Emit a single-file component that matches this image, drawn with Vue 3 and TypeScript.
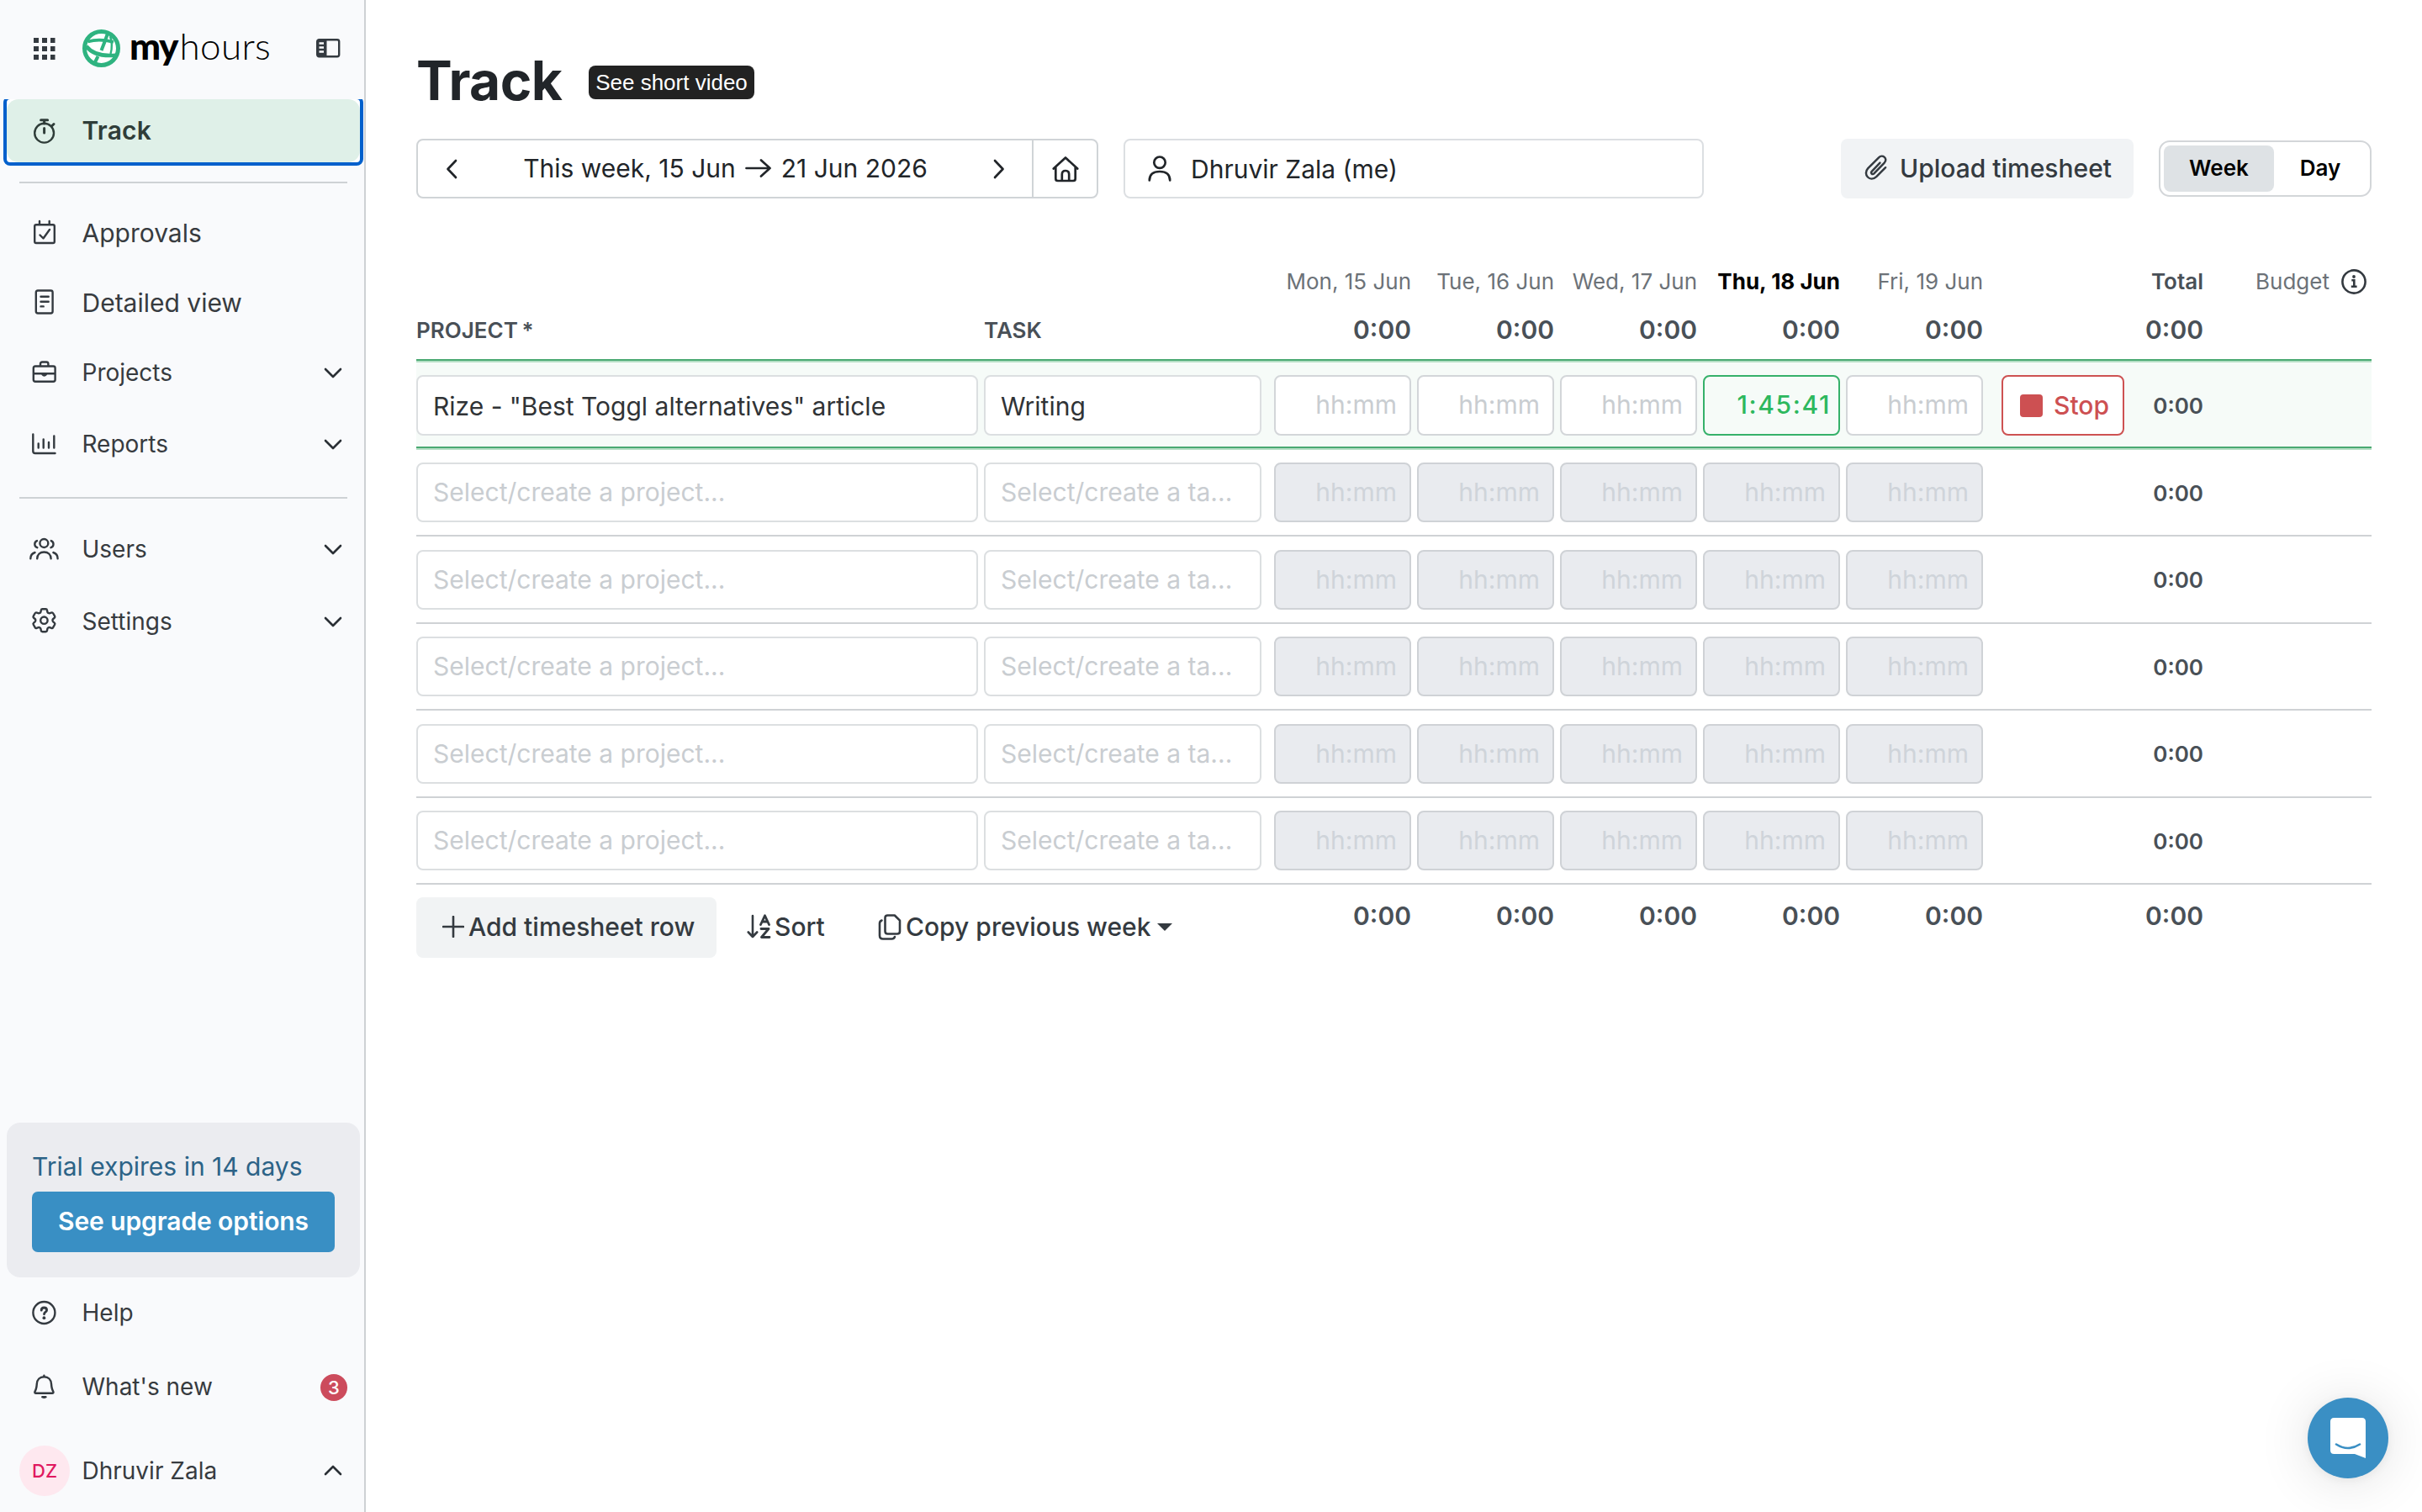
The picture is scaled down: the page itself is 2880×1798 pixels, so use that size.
<script setup lang="ts">
interface NavItem {
  label: string
  icon: string
  height: number
  expandable?: boolean
}

interface TimesheetRow {
  project: string
  task: string
  active: boolean
  entries: string[]
  total: string
}

const gear =
  'M9.594 3.94c.09-.542.56-.94 1.11-.94h2.593c.55 0 1.02.398 1.11.94l.213 1.281c.063.374.313.686.645.87.074.04.147.083.22.127.325.196.72.257 1.075.124l1.217-.456a1.125 1.125 0 0 1 1.37.49l1.296 2.247a1.125 1.125 0 0 1-.26 1.431l-1.003.827c-.293.241-.438.613-.43.992a7.723 7.723 0 0 1 0 .255c-.008.378.137.75.43.991l1.004.827c.424.35.534.955.26 1.43l-1.298 2.247a1.125 1.125 0 0 1-1.369.491l-1.217-.456c-.355-.133-.75-.072-1.076.124a6.47 6.47 0 0 1-.22.128c-.331.183-.581.495-.644.869l-.213 1.281c-.09.543-.56.94-1.11.94h-2.594c-.55 0-1.019-.398-1.11-.94l-.213-1.281c-.062-.374-.312-.686-.644-.87a6.52 6.52 0 0 1-.22-.127c-.325-.196-.72-.257-1.076-.124l-1.217.456a1.125 1.125 0 0 1-1.369-.49l-1.297-2.247a1.125 1.125 0 0 1 .26-1.431l1.004-.827c.292-.24.437-.613.43-.991a6.932 6.932 0 0 1 0-.255c.007-.38-.138-.751-.43-.992l-1.004-.827a1.125 1.125 0 0 1-.26-1.43l1.297-2.247a1.125 1.125 0 0 1 1.37-.491l1.216.456c.356.133.751.072 1.076-.124.072-.044.146-.086.22-.128.332-.183.582-.495.644-.869l.214-1.28Z'

// Outline icons drawn on a 36px grid
const icons: Record<string, string> = {
  approvals:
    'M9 8.2h20q1.800 0 1.800 1.800v18.200q0 1.800-1.800 1.800h-20q-1.800 0-1.800-1.800v-18.200q0-1.800 1.800-1.800zM13 4v4M24.700 4v4M13.500 20.500l4 4 7.500-10.500',
  detailed:
    'M11 3.500h15.400q2.200 0 2.200 2.200v22.600q0 2.200-2.200 2.200h-15.400q-2.200 0-2.200-2.200v-22.600q0-2.200 2.200-2.200zM14.500 10.700h9.200M14.500 16.700h9.200M14.500 22.400h3.200',
  projects:
    'M8 10.500h21.400q2.200 0 2.200 2.200v13.800q0 2.200-2.200 2.200h-21.400q-2.200 0-2.200-2.200v-13.800q0-2.200 2.200-2.200zM14 10.500v-2.800q0-2.200 2.200-2.200h5q2.200 0 2.200 2.200v2.800M5.800 19.200h25.800M16.500 20.200q2 2.600 4.400 0z',
  reports:
    'M5.300 6.500v20q0 2.500 2.500 2.500h23.700M11.700 17.500v5M17.700 12.500v10M24 16v6.500M30.300 8.500v14',
  users:
    'M13.400 11a4.950 4.950 0 1 0 9.900 0a4.950 4.950 0 1 0-9.900 0M10.200 29.300c0-4.800 3.400-7.800 8.200-7.800s8.200 3 8.200 7.800M10 8.100a4.300 4.300 0 0 0 .3 8.100M26.800 8.100a4.300 4.300 0 0 1-.3 8.100M2.300 29.300c0-3.700 1.700-6.200 5.200-7.300M34.600 29.300c0-3.700-1.700-6.200-5.200-7.300',
  help: 'M5.400 18a13 13 0 1 0 26 0a13 13 0 1 0-26 0',
  bell: 'M18.400 6.200c-5.200 0-8.300 3.700-8.600 8.400-.3 4.300-.7 6.400-2 8.500-.9 1.600-.6 2.600.6 2.600h20c1.200 0 1.500-1 .6-2.600-1.300-2.100-1.700-4.200-2-8.500-.3-4.700-3.400-8.400-8.600-8.400zM18.400 4.800v1.400M16.300 30.200q2.100 1 4.200 0z',
}

const primaryNav: NavItem[] = [
  { label: 'Approvals', icon: 'approvals', height: 82 },
  { label: 'Detailed view', icon: 'detailed', height: 84 },
  { label: 'Projects', icon: 'projects', height: 82, expandable: true },
  { label: 'Reports', icon: 'reports', height: 88, expandable: true },
]

const adminNav: NavItem[] = [
  { label: 'Users', icon: 'users', height: 86, expandable: true },
  { label: 'Settings', icon: 'settings', height: 86, expandable: true },
]

const days = [
  { label: 'Mon, 15 Jun', total: '0:00', today: false },
  { label: 'Tue, 16 Jun', total: '0:00', today: false },
  { label: 'Wed, 17 Jun', total: '0:00', today: false },
  { label: 'Thu, 18 Jun', total: '0:00', today: true },
  { label: 'Fri, 19 Jun', total: '0:00', today: false },
]

const emptyRow = (): TimesheetRow => ({
  project: '',
  task: '',
  active: false,
  entries: ['', '', '', '', ''],
  total: '0:00',
})

const rows: TimesheetRow[] = [
  {
    project: 'Rize - "Best Toggl alternatives" article',
    task: 'Writing',
    active: true,
    entries: ['', '', '', '1:45:41', ''],
    total: '0:00',
  },
  ...Array.from({ length: 5 }, emptyRow),
]
</script>

<template>
  <div class="app">
    <aside class="sidebar">
      <header class="brand">
        <svg class="apps" width="26" height="26" viewBox="0 0 26 26">
          <path d="M0 0h6v6H0zM10 0h6v6h-6zM20 0h5.500v6h-5.500zM0 10h6v6H0zM10 10h6v6h-6zM20 10h5.500v6h-5.500zM0 20h6v6H0zM10 20h6v6h-6zM20 20h5.500v6h-5.500z" />
        </svg>
        <svg class="globe" width="45" height="45" viewBox="0 0 45 45">
          <circle cx="22.500" cy="22.500" r="20" fill="#fff" stroke="#2fb380" stroke-width="5" />
          <g fill="none" stroke="#2fb380" stroke-width="4">
            <path d="M6.500 14.500Q20 10.500 37 15" stroke-width="3.600" />
            <path d="M4.500 20Q15 33.500 41.500 30.500" stroke-width="4.600" />
            <path d="M30 5Q26.500 15 22.500 25M18.500 32L14.500 40" />
            <path d="M33 8Q36.500 18 33.500 29" stroke-width="2.400" />
          </g>
        </svg>
        <span class="wordmark"><b>my</b><span>hours</span></span>
        <svg class="collapse" width="29" height="23" viewBox="0 0 29 23">
          <rect x="1.200" y="1.200" width="26" height="20" rx="2.200" fill="none" stroke="#343a40" stroke-width="2.400" />
          <path d="M2 2h10.500v19H2z" fill="#343a40" />
          <path d="M3.500 5.500h5.500M3.500 10.500h5.500M3.500 15.500h5.500" stroke="#f9fafc" stroke-width="2.600" />
        </svg>
      </header>

      <div class="focus-clip">
        <a class="focus-ring">
          <span class="nav-item current">
            <svg class="icon" viewBox="0 0 36 36">
              <circle cx="18.600" cy="20.200" r="11.400" />
              <path d="M14.600 4.800h8M18.600 5v4M27.500 12l2.500-2.500M18.600 14.500v5.500" stroke-width="3" />
            </svg>
            <span class="label">Track</span>
          </span>
        </a>
      </div>

      <hr class="rule" />
      <nav class="group">
        <a v-for="item in primaryNav" :key="item.label" class="nav-item" :class="{ small: item.expandable }" :style="{ height: item.height + 'px' }">
          <svg class="icon" viewBox="0 0 36 36"><path :d="icons[item.icon]" /></svg>
          <span class="label">{{ item.label }}</span>
          <svg v-if="item.expandable" class="chevron" viewBox="0 0 22 14"><path d="M2 2l9 9 9-9" /></svg>
        </a>
      </nav>
      <hr class="rule" />
      <nav class="group admin">
        <a v-for="item in adminNav" :key="item.label" class="nav-item small" :style="{ height: item.height + 'px' }">
          <svg v-if="item.icon === 'settings'" class="icon" viewBox="0 0 36 36">
            <g transform="translate(.4 -1.300) scale(1.500)" stroke-width="1.600">
              <path :d="gear" />
              <circle cx="12" cy="12" r="2.800" />
            </g>
          </svg>
          <svg v-else class="icon" viewBox="0 0 36 36"><path :d="icons[item.icon]" /></svg>
          <span class="label">{{ item.label }}</span>
          <svg class="chevron" viewBox="0 0 22 14"><path d="M2 2l9 9 9-9" /></svg>
        </a>
      </nav>

      <footer class="bottom">
        <section class="trial">
          <p>Trial expires in 14 days</p>
          <button>See upgrade options</button>
        </section>
        <a class="nav-item small help">
          <svg class="icon" viewBox="0 0 36 36">
            <path :d="icons.help" />
            <path d="M15.200 15.200c0-2 1.400-3.200 3.200-3.200s3.200 1.200 3.200 2.900c0 2.300-3.100 2.300-3.100 4.900" stroke-width="2.800" />
            <circle cx="18.400" cy="24.200" r="1.900" class="dot" />
          </svg>
          <span class="label">Help</span>
        </a>
        <a class="nav-item small news">
          <svg class="icon" viewBox="0 0 36 36"><path :d="icons.bell" /></svg>
          <span class="label">What's new</span>
          <span class="count">3</span>
        </a>
        <a class="nav-item small account">
          <span class="avatar">DZ</span>
          <span class="label">Dhruvir Zala</span>
          <svg class="chevron" viewBox="0 0 22 14"><path d="M2 12l9-9 9 9" /></svg>
        </a>
      </footer>
    </aside>

    <main class="main">
      <div class="heading">
        <h1>Track</h1>
        <span class="tip">See short video</span>
      </div>

      <div class="toolbar">
        <div class="range">
          <svg class="arrow prev" width="16" height="24" viewBox="0 0 16 24"><path d="M13 2L3.500 12 13 22" /></svg>
          <span class="dates">
            <span>This week, 15 Jun</span>
            <svg width="32" height="22" viewBox="0 0 32 22"><path d="M1.500 11h28M19 1.500L29.500 11 19 20.500" /></svg>
            <span>21 Jun 2026</span>
          </span>
          <svg class="arrow next" width="16" height="24" viewBox="0 0 16 24"><path d="M3 2l9.500 10L3 22" /></svg>
          <span class="home">
            <svg width="32" height="32" viewBox="0 0 32 32">
              <path d="M1.800 15.500L16 2.500l14.200 13M4.300 13.500v14q0 2.500 2.500 2.500h18.400q2.500 0 2.500-2.500v-14M11.800 30v-7.500q0-4.500 4.200-4.500t4.200 4.500V30" />
            </svg>
          </span>
        </div>
        <div class="person">
          <svg width="28" height="31" viewBox="0 0 28 31">
            <circle cx="14" cy="8.200" r="6.700" />
            <path d="M1.800 29.500c0-7.500 5-10.500 12.200-10.500s12.200 3 12.200 10.500" />
          </svg>
          <span>Dhruvir Zala (me)</span>
        </div>
        <button class="upload">
          <svg width="30" height="32" viewBox="0 0 30 32">
            <path d="M20.500 9.500L10.200 20.300c-1.800 2 .8 4.800 2.800 2.800L26 9.500c5-5.500-2.500-11-7-6.500L5.500 16.500c-7 7.500 2.500 18 10.500 10.500L27.500 15.500" transform="translate(0 .5) scale(.95)" />
          </svg>
          <span>Upload timesheet</span>
        </button>
        <div class="switch">
          <span class="option on">Week</span>
          <span class="option">Day</span>
        </div>
      </div>

      <section class="sheet">
        <div class="head dates-head">
          <span class="names"></span>
          <div class="days">
            <span v-for="day in days" :key="day.label" class="day" :class="{ today: day.today }">{{ day.label }}</span>
          </div>
          <span class="action"></span>
          <b class="total">Total</b>
          <span class="budget">
            Budget
            <svg width="30" height="30" viewBox="0 0 30 30">
              <circle cx="15" cy="15" r="13.600" />
              <path d="M12.300 13.200h3v7.500M11.800 20.800h6.800" />
              <circle cx="15" cy="9" r="1.900" class="dot" />
            </svg>
          </span>
        </div>
        <div class="head sums-head">
          <div class="names">
            <b class="project-name">PROJECT *</b>
            <b>TASK</b>
          </div>
          <div class="days">
            <b v-for="day in days" :key="day.label" class="day">{{ day.total }}</b>
          </div>
          <span class="action"></span>
          <b class="total">0:00</b>
        </div>

        <div v-for="(row, i) in rows" :key="i" class="row" :class="{ active: row.active, after: i === 1 }">
          <div class="names">
            <div class="field project" :class="{ filled: row.project }">{{ row.project || 'Select/create a project...' }}</div>
            <div class="field task" :class="{ filled: row.task }">{{ row.task || 'Select/create a ta...' }}</div>
          </div>
          <div class="days">
            <div v-for="(entry, d) in row.entries" :key="d" class="field hours" :class="{ disabled: !row.active, running: entry }">{{ entry || 'hh:mm' }}</div>
          </div>
          <div class="action">
            <button v-if="row.active" class="stop"><i></i><span>Stop</span></button>
          </div>
          <b class="total">{{ row.total }}</b>
        </div>

        <div class="foot">
          <div class="names">
            <button class="add">
              <svg width="26" height="26" viewBox="0 0 26 26"><path d="M13 1v24M1 13h24" /></svg>
              <span>Add timesheet row</span>
            </button>
            <button class="sort">
              <svg width="29" height="30" viewBox="0 0 29 30">
                <path d="M7 2v25M1.800 21.500L7 27l5.200-5.500" />
                <path d="M16.500 12.500L21.500 1.800l5 10.700M18.200 9h6.600M17 17.500h9L17.500 27.500H27" stroke-width="2.800" />
              </svg>
              <span>Sort</span>
            </button>
            <button class="copy">
              <svg width="28" height="31" viewBox="0 0 28 31">
                <path d="M11.500 1.500h8.300l6.200 6.200v12.800q0 3-3 3H11.500q-3 0-3-3v-16q0-3 3-3zM4.500 7.500Q2 8.500 2 11v14.500q0 4 4 4h10.500q2.500 0 3.500-2.500" />
              </svg>
              <span>Copy previous week</span>
              <i class="caret"></i>
            </button>
          </div>
          <div class="days">
            <b v-for="day in days" :key="day.label" class="day">{{ day.total }}</b>
          </div>
          <span class="action"></span>
          <b class="total">0:00</b>
        </div>
      </section>
    </main>

    <button class="chat" aria-label="Chat">
      <svg width="42" height="48" viewBox="0 0 42 48">
        <path d="M4.500 0h33Q42 0 42 4.500V48l-13-5H4.500Q0 43 0 38.500v-34Q0 0 4.500 0z" fill="#fff" />
        <path d="M7 31.500q14 9 28 0" fill="none" stroke="#3a8fc4" stroke-width="2.600" stroke-linecap="round" />
      </svg>
    </button>
  </div>
</template>

<style>
body {
  margin: 0;
  background: #fff;
}
</style>

<style scoped>
* {
  box-sizing: border-box;
}
.app {
  display: flex;
  position: relative;
  width: 2880px;
  height: 1798px;
  overflow: hidden;
  background: #fff;
  font-family: Inter, 'Liberation Sans', sans-serif;
  font-size: 30px;
  line-height: 36px;
  color: #212529;
}
button {
  font: inherit;
  border: 0;
  padding: 0;
  color: inherit;
  background: none;
}
svg {
  flex: none;
  display: block;
}
b {
  font-weight: 600;
}

/* Sidebar */
.sidebar {
  display: flex;
  flex-direction: column;
  flex: none;
  width: 435px;
  background: #f9fafc;
  border-right: 2px solid #ced1d4;
  color: #373b3f;
}
.brand {
  display: flex;
  align-items: flex-start;
  height: 118px;
  flex: none;
  padding-left: 40px;
}
.apps {
  margin-top: 45px;
  fill: #343a40;
}
.globe {
  margin: 35px 0 0 32px;
}
.wordmark {
  display: flex;
  width: 168px;
  margin: 28px 0 0 11px;
  font-family: Lato, sans-serif;
  font-size: 44px;
  line-height: 52px;
  color: #000;
}
.wordmark b {
  font-weight: 900;
  width: 61px;
  letter-spacing: -1.4px;
}
.wordmark span {
  font-weight: 300;
  letter-spacing: 0.3px;
}
.collapse {
  margin: 46px 0 0 54px;
}
.focus-clip {
  flex: none;
  height: 79px;
  padding: 0 1px 0 4px;
  overflow: hidden;
}
.focus-ring {
  display: block;
  height: 83px;
  margin-top: -4px;
  border: 4px solid #0060cc;
  border-radius: 8px;
  background: #fff;
}
.nav-item {
  display: flex;
  align-items: center;
  padding-left: 34px;
  padding-right: 26px;
}
.nav-item.small {
  font-size: 28px;
}
.current {
  height: 75px;
  padding-left: 26px;
  border-radius: 14px;
  background: #dff0e8;
  font-weight: 600;
  color: #2f3d39;
}
.current .icon {
  stroke: #2f3d39;
}
.current .label {
  margin-top: -2px;
  letter-spacing: 0.2px;
}
.icon {
  width: 36px;
  height: 36px;
  margin-right: 27.5px;
  fill: none;
  stroke: #343a40;
  stroke-width: 2.4;
  stroke-linecap: round;
  stroke-linejoin: round;
}
.dot {
  fill: #343a40;
  stroke: none;
}
.label {
  flex: 1;
  white-space: nowrap;
}
.chevron {
  width: 22px;
  height: 14px;
  margin-top: 2px;
  fill: none;
  stroke: #2b3036;
  stroke-width: 2.6;
  stroke-linecap: round;
  stroke-linejoin: round;
}
.rule {
  flex: none;
  width: 390px;
  height: 2px;
  margin: 19px 0 0 23px;
  border: 0;
  background: #ced2d5;
}
.group {
  padding-top: 18px;
}
.group.admin {
  padding-top: 17px;
}
.bottom {
  margin-top: auto;
}
.trial {
  height: 184px;
  margin: 0 5px 0 8px;
  padding: 34px 30px 0;
  border-radius: 16px;
  background: #ebecf0;
}
.trial p {
  margin: 0;
  color: #2c6387;
  white-space: nowrap;
}
.trial button {
  display: block;
  width: 360px;
  height: 72px;
  margin-top: 12px;
  padding-bottom: 2px;
  border-radius: 7px;
  background: #398fc4;
  color: #fff;
  font-weight: 600;
  letter-spacing: -0.1px;
  white-space: nowrap;
}
.help {
  height: 84px;
}
.news {
  height: 92px;
  padding-right: 20px;
}
.count {
  width: 32px;
  height: 32px;
  margin-top: 2px;
  border-radius: 50%;
  background: #cc4b5c;
  color: #fff;
  font-size: 22px;
  font-weight: 500;
  line-height: 32px;
  text-align: center;
}
.account {
  height: 98px;
  margin-top: 5px;
  padding-left: 23px;
}
.account .chevron {
  margin-top: -2px;
}
.avatar {
  width: 60px;
  height: 60px;
  margin-right: 14.5px;
  border-radius: 50%;
  background: #fee8ef;
  color: #e0195f;
  font-size: 22px;
  font-weight: 500;
  line-height: 60px;
  text-align: center;
}

/* Header and toolbar */
.main {
  width: 2325px;
  margin-left: 60px;
}
.heading {
  display: flex;
  height: 165px;
}
h1 {
  margin: 56px 0 0;
  width: 205px;
  font-size: 64px;
  font-weight: 700;
  line-height: 80px;
  letter-spacing: -0.6px;
}
.tip {
  width: 197px;
  height: 40px;
  margin-top: 78px;
  border-radius: 8px;
  background: #222;
  color: #fff;
  font-family: 'Liberation Sans', Arial, sans-serif;
  font-size: 26px;
  line-height: 40px;
  text-align: center;
  white-space: nowrap;
}
.toolbar {
  display: flex;
  height: 71px;
}
.range {
  display: flex;
  align-items: center;
  width: 811px;
  border: 2px solid #d0d4d7;
  border-radius: 8px;
}
.range svg,
.person svg {
  fill: none;
  stroke: #212529;
  stroke-width: 2.7;
  stroke-linecap: round;
  stroke-linejoin: round;
}
.prev {
  margin-left: 32px;
}
.dates {
  display: flex;
  align-items: center;
  justify-content: center;
  gap: 11px;
  flex: 1;
  padding-bottom: 2px;
  white-space: nowrap;
}
.next {
  margin-right: 31px;
}
.home {
  display: flex;
  align-items: center;
  justify-content: center;
  width: 77px;
  height: 67px;
  border-left: 2px solid #d0d4d7;
}
.person {
  display: flex;
  align-items: center;
  width: 690px;
  margin-left: 30px;
  padding-left: 27px;
  gap: 23px;
  border: 2px solid #dcdfe2;
  border-radius: 8px;
  white-space: nowrap;
}
.upload {
  display: flex;
  align-items: center;
  width: 348px;
  margin-left: 163px;
  padding: 0 0 2px 27px;
  gap: 13px;
  border-radius: 8px;
  background: #f1f3f5;
  color: #343a40;
  font-weight: 500;
  white-space: nowrap;
}
.upload svg,
.foot svg {
  fill: none;
  stroke: #343a40;
  stroke-width: 2.6;
  stroke-linecap: round;
  stroke-linejoin: round;
}
.switch {
  display: flex;
  width: 253px;
  height: 67px;
  margin: 2px 0 0 30px;
  padding: 4px;
  border: 2px solid #d3d6d9;
  border-radius: 13px;
  color: #000;
  font-size: 26px;
  font-weight: 600;
}
.option {
  width: 110px;
  height: 55px;
  line-height: 53px;
  text-align: center;
}
.option.on {
  width: 131px;
  border-radius: 8px;
  background: #dee2e5;
}

/* Timesheet grid */
.names {
  display: flex;
  gap: 7px;
  width: 1005px;
  flex: none;
}
.days {
  display: flex;
  gap: 7px;
  margin-left: 15px;
}
.day {
  width: 163px;
  display: flex;
  justify-content: flex-end;
  white-space: nowrap;
}
.action {
  width: 146px;
  margin-left: 22px;
}
.total {
  width: 94px;
  text-align: right;
  color: #495057;
}
.head {
  display: flex;
  align-items: center;
  color: #6c7278;
}
.dates-head {
  height: 58px;
  margin-top: 70px;
  font-size: 26px;
}
.today {
  color: #000;
  font-weight: 700;
}
.budget {
  display: flex;
  align-items: center;
  gap: 14px;
  margin-left: 62px;
}
.budget svg {
  fill: none;
  stroke: #343a40;
  stroke-width: 2.6;
}
.sums-head {
  height: 56px;
  margin-bottom: 7px;
  padding-bottom: 1px;
  color: #495057;
}
.sums-head .names {
  padding-top: 3px;
  font-size: 26px;
}
.project-name {
  width: 668px;
  word-spacing: -2px;
}
.row {
  display: flex;
  align-items: center;
  height: 103.5px;
  padding-top: 1px;
  border-bottom: 2px solid #cfd2d5;
}
.row.active {
  height: 106px;
  padding-top: 4px;
  border-top: 2px solid #4aa972;
  border-bottom: 2px solid #4aa972;
  box-shadow: inset 0 2px #b5dfc5, 0 2px #b5dfc5;
  background: #f6fbf8;
}
.row.after {
  height: 105px;
  padding-top: 2px;
}
.field {
  height: 72px;
  border: 2px solid #dcdfe1;
  border-radius: 8px;
  background: #fff;
  color: #c9cdd1;
  line-height: 70px;
  white-space: nowrap;
  padding-left: 18px;
}
.row:not(.active) .field {
  height: 71px;
  line-height: 67px;
}
.project {
  width: 668px;
}
.task {
  width: 330px;
}
.filled {
  color: #303336;
}
.hours {
  width: 163px;
  padding: 0 15px 0 0;
  border-color: #d3d6d9;
  line-height: 67px;
  text-align: right;
}
.row:not(.active) .hours {
  line-height: 66px;
}
.hours.disabled {
  border-color: #cfd2d6;
  background: #e9ebef;
  color: #cfd4da;
}
.hours.running {
  padding-right: 9px;
  border-color: #36b16a;
  background: #f6fbf8;
  color: #2db85e;
  font-weight: 500;
  letter-spacing: 1.6px;
}
.stop {
  display: flex;
  align-items: center;
  width: 146px;
  height: 72px;
  padding-left: 20px;
  gap: 13px;
  border: 2px solid #cd5252;
  border-radius: 8px;
  background: #fff;
  color: #cd5052;
  font-weight: 500;
}
.stop i {
  width: 27px;
  height: 27px;
  border-radius: 4px;
  background: #cd5052;
}
.row .total {
  margin-top: 2px;
  font-size: 26px;
}
.foot {
  display: flex;
  padding-top: 15px;
  color: #495057;
}
.foot .day,
.foot .total {
  margin-top: 4px;
}
.foot button {
  display: flex;
  align-items: center;
  height: 72px;
  padding-bottom: 2px;
  gap: 6px;
  color: #343a40;
  font-weight: 500;
  white-space: nowrap;
}
.foot .names {
  gap: 0;
}
.foot .add {
  width: 357px;
  padding-left: 31px;
  gap: 5px;
  border-radius: 8px;
  background: #f1f3f4;
}
.foot .sort {
  margin-left: 36px;
  width: 156px;
  gap: 4px;
}
.foot .copy {
  gap: 5px;
}
.caret {
  margin-left: 2px;
  border: 9px solid transparent;
  border-top-color: #343a40;
  border-bottom: 0;
}

/* Chat launcher floats over the page */
.chat {
  position: absolute;
  right: 40px;
  bottom: 40px;
  display: flex;
  align-items: center;
  justify-content: center;
  width: 96px;
  height: 96px;
  border-radius: 50%;
  background: #3a8fc4;
  box-shadow: 0 2px 12px rgba(0, 0, 0, 0.06), 0 4px 64px rgba(0, 0, 0, 0.12);
}
</style>
